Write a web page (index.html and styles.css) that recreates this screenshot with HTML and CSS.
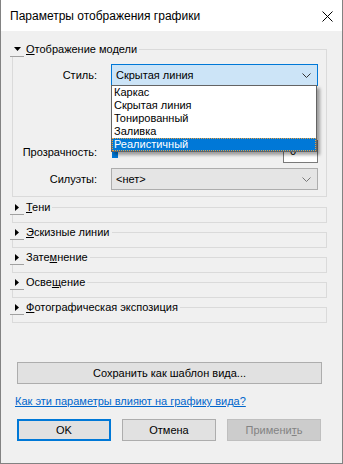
FILE: index.html
```html
<!DOCTYPE html>
<html lang="ru">
  <head>
    <meta charset="UTF-8" />
    <meta name="viewport" content="width=device-width, initial-scale=1.0" />
    <title>Параметры отображения графики</title>
    <link rel="stylesheet" href="styles.css">
  </head>
  <body>
    <div class="window">
      <div class="titlebar">
        <span class="title">Параметры отображения графики</span>
        <svg class="close" width="11" height="11" viewBox="0 0 11 11">
          <path d="M0.5 0.5 L10.5 10.5 M10.5 0.5 L0.5 10.5" stroke="#000" stroke-width="1" fill="none" />
        </svg>
      </div>

      <div class="content">
        <fieldset class="group open">
          <legend>
            <span class="toggle">
              <svg width="7" height="4" viewBox="0 0 7 4"><path d="M0 0 H7 L3.5 4 Z" fill="#000" /></svg>
            </span>
            <span class="caption"><u>О</u>тображение модели</span>
          </legend>
          <div class="form">
            <div class="row row-style">
              <label class="lbl">Стиль:</label>
              <div class="combo-wrap">
                <div class="combo active">
                  <span>Скрытая линия</span>
                  <svg width="9" height="5" viewBox="0 0 9 5"><path d="M0.5 0.5 L4.5 4.5 L8.5 0.5" stroke="#333" fill="none" /></svg>
                </div>
                <ul class="list">
                  <li>Каркас</li>
                  <li>Скрытая линия</li>
                  <li>Тонированный</li>
                  <li>Заливка</li>
                  <li class="selected">Реалистичный</li>
                </ul>
              </div>
            </div>
            <div class="row row-alpha">
              <label class="lbl">Прозрачность:</label>
              <div class="slider">
                <span class="thumb"></span>
                <span class="spin">0</span>
              </div>
            </div>
            <div class="row row-sil">
              <label class="lbl">Силуэты:</label>
              <div class="combo">
                <span>&lt;нет&gt;</span>
                <svg width="9" height="5" viewBox="0 0 9 5"><path d="M0.5 0.5 L4.5 4.5 L8.5 0.5" stroke="#777" fill="none" /></svg>
              </div>
            </div>
          </div>
        </fieldset>

        <fieldset class="group closed">
          <legend>
            <span class="toggle"><svg width="4" height="7" viewBox="0 0 4 7"><path d="M0 0 V7 L4 3.5 Z" fill="#000" /></svg></span>
            <span class="caption"><u>Т</u>ени</span>
          </legend>
        </fieldset>
        <fieldset class="group closed">
          <legend>
            <span class="toggle"><svg width="4" height="7" viewBox="0 0 4 7"><path d="M0 0 V7 L4 3.5 Z" fill="#000" /></svg></span>
            <span class="caption"><u>Э</u>скизные линии</span>
          </legend>
        </fieldset>
        <fieldset class="group closed">
          <legend>
            <span class="toggle"><svg width="4" height="7" viewBox="0 0 4 7"><path d="M0 0 V7 L4 3.5 Z" fill="#000" /></svg></span>
            <span class="caption">Зате<u>м</u>нение</span>
          </legend>
        </fieldset>
        <fieldset class="group closed">
          <legend>
            <span class="toggle"><svg width="4" height="7" viewBox="0 0 4 7"><path d="M0 0 V7 L4 3.5 Z" fill="#000" /></svg></span>
            <span class="caption">Осве<u>щ</u>ение</span>
          </legend>
        </fieldset>
        <fieldset class="group closed">
          <legend>
            <span class="toggle"><svg width="4" height="7" viewBox="0 0 4 7"><path d="M0 0 V7 L4 3.5 Z" fill="#000" /></svg></span>
            <span class="caption"><u>Ф</u>отографическая экспозиция</span>
          </legend>
        </fieldset>

        <button type="button" class="btn wide">Сохранить как шаблон вида...</button>
        <a class="help" href="#">Как эти параметры влияют на графику вида?</a>

        <div class="actions">
          <button type="button" class="btn default">OK</button>
          <button type="button" class="btn">Отмена</button>
          <button type="button" class="btn" disabled>Примени<u>т</u>ь</button>
        </div>
      </div>
    </div>
  </body>
</html>
```

FILE: styles.css
```css
* {
  box-sizing: border-box;
}
body {
  margin: 0;
  font-family: "Liberation Sans", Arial, sans-serif;
  font-size: 11px;
  color: #000;
}
.window {
  width: 343px;
  height: 464px;
  border: 1px solid #828282;
  border-top: none;
  background-color: #f0f0f0;
  display: flex;
  flex-direction: column;
}
.titlebar {
  height: 31px;
  background-color: #fff;
  display: flex;
  align-items: center;
  justify-content: space-between;
  padding: 1px 9px 0 9px;
}
.title {
  font-size: 12px;
  line-height: 16px;
}
.content {
  flex: 1;
  padding-top: 11px;
  display: flex;
  flex-direction: column;
}
.group {
  margin: 0 15px 0 11px;
  padding: 0;
  border: 1px solid #dadada;
  min-width: 0;
}
.group.open {
  margin-bottom: 1px;
}
.group.closed {
  margin-top: 2px;
  padding-bottom: 7px;
}
legend {
  display: flex;
  align-items: center;
  margin-left: -3px;
  padding: 0 2px 0 0;
  height: 15px;
}
.toggle {
  width: 14px;
  height: 15px;
  border-bottom: 1px solid #a0a0a0;
  display: flex;
  align-items: center;
  justify-content: center;
  margin-right: 2px;
}
.caption {
  line-height: 15px;
}
.form {
  padding: 7px 8px 6px 0;
}
.row {
  display: flex;
  align-items: center;
}
.lbl {
  width: 84px;
  margin-right: 14px;
  text-align: right;
}
.row-style {
  height: 22px;
  margin-bottom: 54px;
}
.row-alpha {
  height: 23px;
  margin-bottom: 5px;
}
.row-sil {
  height: 22px;
}
.combo-wrap {
  flex: 1;
  height: 22px;
  position: relative;
}
.combo {
  flex: 1;
  height: 22px;
  border: 1px solid #adadad;
  background-color: #e5e5e5;
  display: flex;
  align-items: center;
  justify-content: space-between;
  padding: 0 6px 0 4px;
}
.combo.active {
  background-color: #cce4f7;
  border-color: #0078d7;
}
.list {
  position: absolute;
  top: 21px;
  left: 0;
  width: 206px;
  margin: 0;
  padding: 0;
  list-style: none;
  background-color: #fff;
  border: 1px solid #646464;
  box-shadow: 3px 3px 3px rgba(0, 0, 0, 0.35);
  z-index: 2;
}
.list li {
  height: 13px;
  line-height: 13px;
  padding-left: 2px;
}
.list li.selected {
  background-color: #0078d7;
  color: #fff;
  outline: 1px dotted #e8a040;
  outline-offset: -1px;
}
.slider {
  flex: 1;
  height: 23px;
  display: flex;
  align-items: center;
  justify-content: space-between;
}
.thumb {
  width: 6px;
  height: 12px;
  margin-left: 1px;
  margin-top: 1px;
  background-color: #0078d7;
}
.spin {
  width: 35px;
  height: 23px;
  border: 1px solid #7a7a7a;
  background-color: #fff;
  padding-left: 6px;
  line-height: 21px;
}
.btn {
  font-family: "Liberation Sans", Arial, sans-serif;
  font-size: 11px;
  color: #000;
  height: 22px;
  background-color: #e1e1e1;
  border: 1px solid #adadad;
  padding: 0;
}
.btn.wide {
  margin: 39px 20px 0 16px;
}
.btn.default {
  border: 2px solid #0078d7;
}
.btn:disabled {
  background-color: #cccccc;
  border-color: #bfbfbf;
  color: #838383;
}
.help {
  margin: 9px 0 0 14px;
  line-height: 16px;
  color: #0066cc;
}
.actions {
  display: flex;
  gap: 11px;
  margin: 10px 0 0 16px;
}
.actions .btn {
  width: 94px;
}
```
